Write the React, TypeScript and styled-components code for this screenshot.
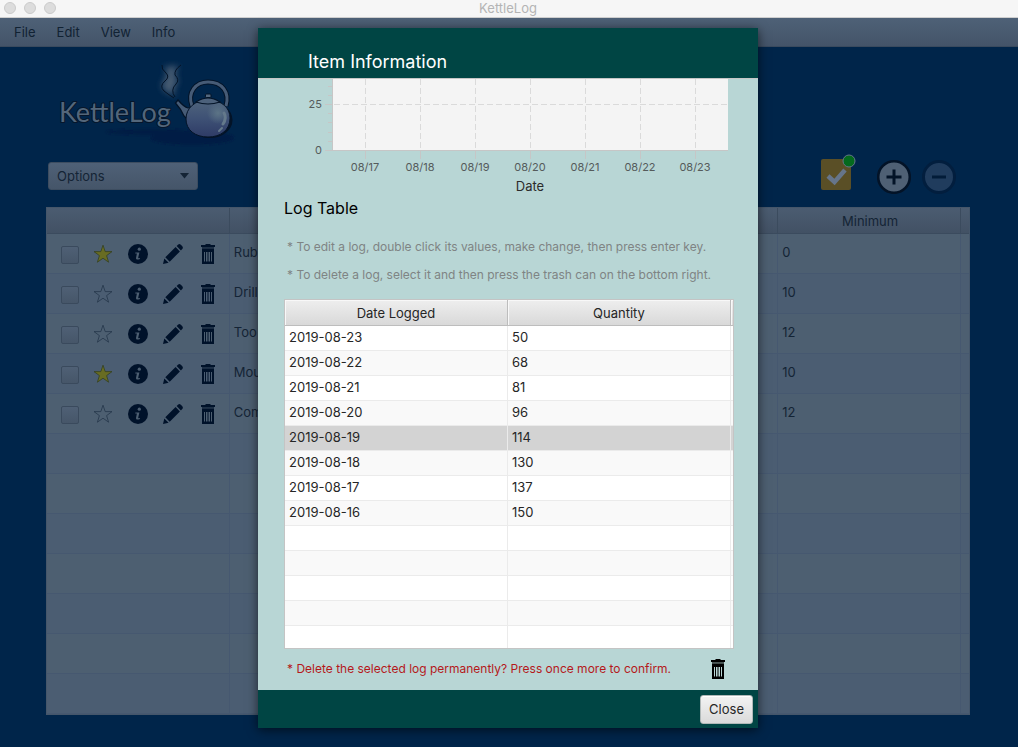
import React from "react";
import styled, { createGlobalStyle, css } from "styled-components";

const GlobalStyle = createGlobalStyle`
  *, *::before, *::after { box-sizing: border-box; }
  body {
    margin: 0;
    background: #00254a;
    font-family: Inter, "Liberation Sans", sans-serif;
    font-size: 13px;
    line-height: 16px;
  }
  button, input, select { font: inherit; }
`;

const Window = styled.div`
  position: relative;
  display: flex;
  flex-direction: column;
  min-height: 100vh;
  color: #142435;
`;

const TitleBar = styled.header`
  display: grid;
  grid-template-columns: 1fr auto 1fr;
  align-items: center;
  height: 18px;
  padding: 0 6px 3px 4px;
  background: #f6f6f6;
  border-bottom: 1px solid #cfcfcf;
`;

const Lights = styled.div`
  display: flex;
  gap: 8px;
`;

const Light = styled.span`
  width: 12px;
  height: 12px;
  border: 1px solid #cbcbcb;
  border-radius: 50%;
  background: #dcdcdc;
`;

const WindowTitle = styled.span`
  color: #b4b4b4;
`;

const MenuBar = styled.nav`
  display: flex;
  align-items: center;
  gap: 21px;
  height: 29px;
  padding: 0 14px;
  background: linear-gradient(#4e6177, #445469);
  border-bottom: 1px solid #3a4a5e;
`;

const MenuButton = styled.button`
  padding: 0;
  border: 0;
  background: none;
  color: #112233;
`;

const Main = styled.main`
  padding: 13px 48px 32px 46px;
`;

const Logo = styled.svg`
  display: block;
  width: 200px;
  height: 90px;
  margin-bottom: 4px;
`;

const Toolbar = styled.div`
  display: flex;
  align-items: center;
  justify-content: space-between;
  height: 44px;
  margin-bottom: 9px;
  padding: 0 14px 0 2px;
`;

const SelectBox = styled.div`
  position: relative;
  width: 150px;

  svg {
    position: absolute;
    top: 11px;
    right: 9px;
    pointer-events: none;
  }
`;

const Select = styled.select`
  display: block;
  width: 100%;
  height: 28px;
  padding: 0 8px;
  appearance: none;
  border: 1px solid #3d4d60;
  border-radius: 3px;
  background: linear-gradient(#4f6177, #455569);
  color: #142435;
`;

const Actions = styled.div`
  display: flex;
  align-items: center;
  gap: 11px;
`;

const IconButton = styled.button<{ $spaced?: boolean }>`
  display: block;
  padding: 0;
  border: 0;
  background: none;
  margin-right: ${(p) => (p.$spaced ? "10px" : "0")};

  svg { display: block; }
`;

const ItemTable = styled.table`
  width: 100%;
  table-layout: fixed;
  border-collapse: separate;
  border-spacing: 0;
  border: 1px solid #45566a;
`;

const ItemHead = styled.th`
  height: 26px;
  padding: 0 0 0 2px;
  border-right: 1px solid #3b4b5e;
  border-bottom: 1px solid #3b4b5e;
  background: linear-gradient(#4b5c71, #425164);
  font-weight: 400;

  &:last-child { border-right: 0; }
`;

const ItemRow = styled.tr<{ $odd: boolean }>`
  background: ${(p) => (p.$odd ? "#4b5d72" : "#4d5f71")};
`;

const ItemCell = styled.td`
  height: 40px;
  padding: 0 4px 3px;
  overflow: hidden;
  white-space: nowrap;
  border-right: 1px solid #465870;
  border-bottom: 1px solid #465870;

  &:last-child { border-right: 0; }
`;

const RowTools = styled.div`
  display: flex;
  align-items: center;
  gap: 15px;
  padding: 3px 0 0 10px;
`;

const Tick = styled.input`
  width: 18px;
  height: 18px;
  margin: 2px -1px 0 0;
  appearance: none;
  border: 1px solid #3a4a5d;
  border-radius: 2px;
  background: linear-gradient(#4f6075, #465669);
`;

const Overlay = styled.div`
  position: absolute;
  inset: 0;
  display: flex;
  justify-content: center;
  align-items: flex-start;
  padding: 28px 10px 19px 8px;
`;

const Dialog = styled.section`
  display: flex;
  flex-direction: column;
  width: 500px;
  max-width: 100%;
  background: #b8d6d5;
  color: #262626;
  box-shadow: 0 2px 10px rgba(0, 0, 0, 0.6);
`;

const DialogHeader = styled.header`
  height: 50px;
  padding: 22px 50px 0;
  background: #004544;
`;

const DialogTitle = styled.h1`
  margin: 0;
  color: #ffffff;
  font-size: 18px;
  line-height: 24px;
  font-weight: 400;
`;

const DialogBody = styled.div`
  border-top: 1px solid #c6c6c6;
`;

const Chart = styled.svg`
  display: block;
  width: 100%;
  height: auto;
`;

const LogSection = styled.div`
  padding: 0 24px 0 26px;
`;

const SectionTitle = styled.h2`
  margin: 0 0 13px;
  color: #000000;
  font-size: 16px;
  line-height: 24px;
  font-weight: 400;
`;

const Hint = styled.p<{ $alert?: boolean }>`
  margin: 0;
  padding-left: 3px;
  color: ${(p) => (p.$alert ? "#b5191b" : "#7f8484")};
  font-size: 12px;
  line-height: 28px;
  white-space: nowrap;
`;

const LogFrame = styled.div`
  height: 350px;
  margin-top: 10px;
  overflow: hidden;
  border: 1px solid #c4c4c4;
  background: #ffffff;
`;

const LogTable = styled.table`
  width: 100%;
  table-layout: fixed;
  border-collapse: separate;
  border-spacing: 0;
`;

const LogHead = styled.th`
  height: 26px;
  padding: 0;
  border-right: 1px solid #bdbdbd;
  border-bottom: 1px solid #bdbdbd;
  background: linear-gradient(#eeeeee, #d9d9d9);
  box-shadow: inset 1px 1px 0 #f8f8f8;
  font-weight: 400;

  &:last-child { border-right: 0; }
`;

const LogRow = styled.tr<{ $odd: boolean; $selected: boolean }>`
  background: ${(p) => (p.$odd ? "#f9f9f9" : "#ffffff")};
  ${(p) =>
    p.$selected &&
    css`
      background: #d3d3d3;
    `}
`;

const LogCell = styled.td`
  height: 25px;
  padding: 0 4px 2px;
  border-right: 1px solid #ebebeb;
  border-bottom: 1px solid #ebebeb;

  &:last-child { padding: 0; border-right: 0; }
`;

const ConfirmRow = styled.div`
  display: flex;
  align-items: center;
  justify-content: space-between;
  height: 41px;
  padding: 0 9px 2px 0;
`;

const DialogFooter = styled.footer`
  display: flex;
  align-items: center;
  justify-content: flex-end;
  height: 38px;
  padding: 0 5px;
  background: #004544;
`;

const CloseButton = styled.button`
  height: 29px;
  padding: 0 8px;
  border: 1px solid #b0b8b8;
  border-radius: 3px;
  background: linear-gradient(#f3f3f3, #dadada);
  box-shadow: inset 0 1px 0 #ffffff;
  color: #262626;
`;

const INK = "#00122a";

const StarIcon = ({ filled }: { filled: boolean }) => (
  <svg width="20" height="20" viewBox="0 0 20 20">
    <path
      d="M10 1.2 12.2 7.6H19L13.6 11.6 15.6 18.2 10 14.2 4.4 18.2 6.4 11.6 1 7.6H7.8Z"
      fill={filled ? "#686c22" : "none"}
      stroke={filled ? "#34401f" : "#25364a"}
      strokeWidth="0.8"
    />
  </svg>
);

const InfoIcon = () => (
  <svg width="20" height="20" viewBox="0 0 20 20">
    <circle cx="10" cy="10" r="10" fill={INK} />
    <circle cx="11.3" cy="5.2" r="1.6" fill="#4d5f72" />
    <path
      d="M7.4 8.4H11.4L10.2 13.6Q10 14.6 12 13.9V14.9Q7.6 16.6 8 13.9L8.9 9.5H7.2Z"
      fill="#4d5f72"
    />
  </svg>
);

const PencilIcon = () => (
  <svg width="20" height="20" viewBox="0 0 20 20">
    <path
      d="M0 20 1.3 14.4 5.6 18.7ZM2.3 13.3 12.6 3.1 16.9 7.4 6.7 17.7ZM13.6 2.1 15 .7Q16.4-.5 17.8.8L19.3 2.3Q20.5 3.7 19.2 5.1L17.9 6.4Z"
      fill={INK}
    />
  </svg>
);

const TrashIcon = ({ color = INK }: { color?: string }) => (
  <svg width="14" height="20" viewBox="0 0 14 20">
    <path d="M4.500 0H9.500V1H14V3H0V1H4.500Z" fill={color} />
    <path d="M1 3H13V4.500H1Z" fill={color} opacity="0.6" />
    <path
      d="M1 4.500H13V20H1ZM3 8V17.500H4V8ZM5 8V17.500H6.500V8ZM7.500 8V17.500H9V8ZM10 8V17.500H11V8Z"
      fill={color}
      fillRule="evenodd"
    />
  </svg>
);

const KettleLogo = () => (
  <Logo viewBox="46 60 200 90" role="img" aria-label="KettleLog">
    <defs>
      <linearGradient id="kettleBody" x1="0" y1="0" x2="0" y2="1">
        <stop offset="0" stopColor="#4f647c" />
        <stop offset="0.5" stopColor="#3e5175" />
        <stop offset="1" stopColor="#2e3b66" />
      </linearGradient>
      <radialGradient id="kettleShine">
        <stop offset="0" stopColor="#5c7486" />
        <stop offset="1" stopColor="#5c7486" stopOpacity="0" />
      </radialGradient>
      <filter id="steamBlur" x="-100%" y="-50%" width="300%" height="200%">
        <feGaussianBlur stdDeviation="3" />
      </filter>
      <filter id="shadowBlur" x="-20%" y="-50%" width="140%" height="200%">
        <feGaussianBlur stdDeviation="1.2" />
      </filter>
    </defs>
    <g fill="#041f45" filter="url(#shadowBlur)">
      <ellipse cx="192" cy="138" rx="42" ry="7" />
      <ellipse cx="150" cy="132" rx="44" ry="3" />
    </g>
    <path
      d="M164 67Q169 72 165 79Q159 86 165 91L175 96Q172 88 178 82Q172 72 179 66Z"
      fill="#465b72"
      filter="url(#steamBlur)"
    />
    <path
      d="M162 65Q161 69 166 73Q170 77 165 81Q159 86 164 91Q169 95 174 98M181 65Q174 70 175 75Q180 80 176 84Q170 90 175 97"
      fill="none"
      stroke="#031327"
      strokeWidth="1"
    />
    <text
      x="59"
      y="122"
      fontFamily="Lato, sans-serif"
      fontSize="27"
      fontWeight="400"
      fill="#53667a"
      stroke="#06162b"
      strokeWidth="2"
      paintOrder="stroke"
      strokeLinejoin="round"
    >
      KettleLog
    </text>
    <path
      d="M192 106C187 92 196 82 208 82C222 82 230 92 226 106"
      fill="none"
      stroke="#031327"
      strokeWidth="5"
    />
    <path
      d="M192 106C187 92 196 82 208 82C222 82 230 92 226 106"
      fill="none"
      stroke="#465b76"
      strokeWidth="3"
    />
    <ellipse cx="210" cy="120" rx="22.5" ry="18" fill="#031327" />
    <path
      d="M178 100L175.500 103Q181 109 184 116L188 120 194 107 188 108Q184 107 178 100Z"
      fill="#465b76"
      stroke="#031327"
      strokeWidth="1.2"
    />
    <path
      d="M208 100C222 100 230 108 230 118C230 130 221 137 208 137C195 137 186 130 186 119C186 108 195 100 208 100Z"
      fill="url(#kettleBody)"
      stroke="#031327"
      strokeWidth="1"
    />
    <circle cx="218" cy="113" r="11" fill="url(#kettleShine)" />
    <path d="M224 113Q227 118 223 124" stroke="#64798b" strokeWidth="3" strokeLinecap="round" fill="none" />
    <path d="M222 128L219 131" stroke="#64798b" strokeWidth="2" strokeLinecap="round" />
    <path
      d="M196 102Q208 94 220 102Q208 106 196 102Z"
      fill="#4c617b"
      stroke="#031327"
      strokeWidth="1.2"
    />
    <rect x="205.500" y="94" width="5.500" height="3.500" rx="1" fill="#53687f" stroke="#031327" />
  </Logo>
);

const chartDays = [
  { x: 365, label: "08/17" },
  { x: 420, label: "08/18" },
  { x: 475, label: "08/19" },
  { x: 530, label: "08/20" },
  { x: 585, label: "08/21" },
  { x: 640, label: "08/22" },
  { x: 695, label: "08/23" },
];

const QuantityChart = () => (
  <Chart viewBox="258 79 500 117" fontFamily="Inter, sans-serif">
    <rect x="333" y="79" width="395" height="72" fill="#f4f4f4" />
    <g stroke="#dadada" strokeDasharray="6 3">
      <path d="M334 104.500H727" />
      {chartDays.map((d) => (
        <path key={d.label} d={`M${d.x}.500 79V150`} />
      ))}
    </g>
    <g stroke="#c6c6c6" fill="none">
      <path d="M332.500 79V150.500H728M325 104.500H333M325 150.500H333" />
      <path d="M328 86.500H333M328 95.500H333M328 113.500H333M328 122.500H333M328 132.500H333M328 141.500H333" />
      {chartDays.map((d) => (
        <path key={d.label} d={`M${d.x}.500 151V159`} />
      ))}
    </g>
    <g fill="#555b5b" fontSize="11">
      <text x="322" y="108" textAnchor="end">25</text>
      <text x="322" y="154" textAnchor="end">0</text>
      {chartDays.map((d) => (
        <text key={d.label} x={d.x} y="171" textAnchor="middle">
          {d.label}
        </text>
      ))}
    </g>
    <text x="530" y="191" textAnchor="middle" fontSize="13" fill="#2b2b2b">
      Date
    </text>
  </Chart>
);

const items = [
  { name: "Rub", minimum: "0", starred: true },
  { name: "Drill", minimum: "10", starred: false },
  { name: "Too", minimum: "12", starred: false },
  { name: "Mou", minimum: "10", starred: true },
  { name: "Com", minimum: "12", starred: false },
];

const itemRows = Array.from({ length: 12 }, (_, i) => items[i]);

const logs = [
  { date: "2019-08-23", quantity: "50" },
  { date: "2019-08-22", quantity: "68" },
  { date: "2019-08-21", quantity: "81" },
  { date: "2019-08-20", quantity: "96" },
  { date: "2019-08-19", quantity: "114" },
  { date: "2019-08-18", quantity: "130" },
  { date: "2019-08-17", quantity: "137" },
  { date: "2019-08-16", quantity: "150" },
];

const logRows = Array.from({ length: 13 }, (_, i) => logs[i]);

export default function App() {
  const [selected, setSelected] = React.useState(4);

  return (
    <>
      <GlobalStyle />
      <Window>
        <TitleBar>
          <Lights>
            <Light />
            <Light />
            <Light />
          </Lights>
          <WindowTitle>KettleLog</WindowTitle>
        </TitleBar>
        <MenuBar>
          {["File", "Edit", "View", "Info"].map((m) => (
            <MenuButton key={m} type="button">
              {m}
            </MenuButton>
          ))}
        </MenuBar>

        <Main>
          <KettleLogo />
          <Toolbar>
            <SelectBox>
              <Select aria-label="Options">
                <option>Options</option>
              </Select>
              <svg width="9" height="6" viewBox="0 0 9 6">
                <path d="M0 0H9L4.500 5.500Z" fill="#142435" />
              </svg>
            </SelectBox>
            <Actions>
              <IconButton type="button" aria-label="Select all" $spaced>
                <svg width="36" height="44" viewBox="820 154 36 44">
                  <rect x="821" y="159" width="30" height="31" rx="2" fill="#5a4f26" />
                  <path d="M828 176L834.500 182 845 170" fill="none" stroke="#66758a" strokeWidth="4.500" />
                  <circle cx="849" cy="161" r="6" fill="#046a1e" stroke="#647688" strokeWidth="1" />
                </svg>
              </IconButton>
              <IconButton type="button" aria-label="Add">
                <svg width="34" height="36" viewBox="0 -2 34 36">
                  <circle cx="17" cy="17" r="15.800" fill="#4f6074" stroke="#031327" strokeWidth="2.600" />
                  <path d="M9.500 17H24.500M17 9.500V24.500" stroke="#031327" strokeWidth="3" />
                </svg>
              </IconButton>
              <IconButton type="button" aria-label="Remove">
                <svg width="34" height="36" viewBox="0 -2 34 36">
                  <circle cx="17" cy="17" r="15.500" fill="#203c5d" stroke="#021e3e" strokeWidth="3" />
                  <path d="M10 17H24" stroke="#021c39" strokeWidth="3" />
                </svg>
              </IconButton>
            </Actions>
          </Toolbar>

          <ItemTable>
            <colgroup>
              <col />
              <col />
              <col />
              <col />
              <col />
              <col width="8" />
            </colgroup>
            <thead>
              <tr>
                <ItemHead />
                <ItemHead />
                <ItemHead />
                <ItemHead />
                <ItemHead>Minimum</ItemHead>
                <ItemHead />
              </tr>
            </thead>
            <tbody>
              {itemRows.map((item, i) => (
                <ItemRow key={i} $odd={i % 2 === 1}>
                  <ItemCell>
                    {item && (
                      <RowTools>
                        <Tick type="checkbox" aria-label={`Select ${item.name}`} />
                        <IconButton type="button" aria-label="Favourite">
                          <StarIcon filled={item.starred} />
                        </IconButton>
                        <IconButton type="button" aria-label="Information">
                          <InfoIcon />
                        </IconButton>
                        <IconButton type="button" aria-label="Edit">
                          <PencilIcon />
                        </IconButton>
                        <IconButton type="button" aria-label="Delete">
                          <svg width="20" height="20" viewBox="0 0 20 20">
                            <svg x="3" width="14" height="20">
                              <TrashIcon />
                            </svg>
                          </svg>
                        </IconButton>
                      </RowTools>
                    )}
                  </ItemCell>
                  <ItemCell>{item?.name}</ItemCell>
                  <ItemCell />
                  <ItemCell />
                  <ItemCell>{item?.minimum}</ItemCell>
                  <ItemCell />
                </ItemRow>
              ))}
            </tbody>
          </ItemTable>
        </Main>

        <Overlay>
          <Dialog role="dialog" aria-labelledby="dialog-title">
            <DialogHeader>
              <DialogTitle id="dialog-title">Item Information</DialogTitle>
            </DialogHeader>
            <DialogBody>
              <QuantityChart />
              <LogSection>
                <SectionTitle>Log Table</SectionTitle>
                <Hint>* To edit a log, double click its values, make change, then press enter key.</Hint>
                <Hint>* To delete a log, select it and then press the trash can on the bottom right.</Hint>
                <LogFrame>
                  <LogTable>
                    <colgroup>
                      <col />
                      <col />
                      <col width="2" />
                    </colgroup>
                    <thead>
                      <tr>
                        <LogHead>Date Logged</LogHead>
                        <LogHead>Quantity</LogHead>
                        <LogHead />
                      </tr>
                    </thead>
                    <tbody>
                      {logRows.map((log, i) => (
                        <LogRow
                          key={i}
                          $odd={i % 2 === 1}
                          $selected={i === selected}
                          onClick={() => log && setSelected(i)}
                        >
                          <LogCell>{log?.date}</LogCell>
                          <LogCell>{log?.quantity}</LogCell>
                          <LogCell />
                        </LogRow>
                      ))}
                    </tbody>
                  </LogTable>
                </LogFrame>
                <ConfirmRow>
                  <Hint $alert>* Delete the selected log permanently? Press once more to confirm.</Hint>
                  <IconButton type="button" aria-label="Delete log">
                    <TrashIcon color="#000000" />
                  </IconButton>
                </ConfirmRow>
              </LogSection>
            </DialogBody>
            <DialogFooter>
              <CloseButton type="button">Close</CloseButton>
            </DialogFooter>
          </Dialog>
        </Overlay>
      </Window>
    </>
  );
}
